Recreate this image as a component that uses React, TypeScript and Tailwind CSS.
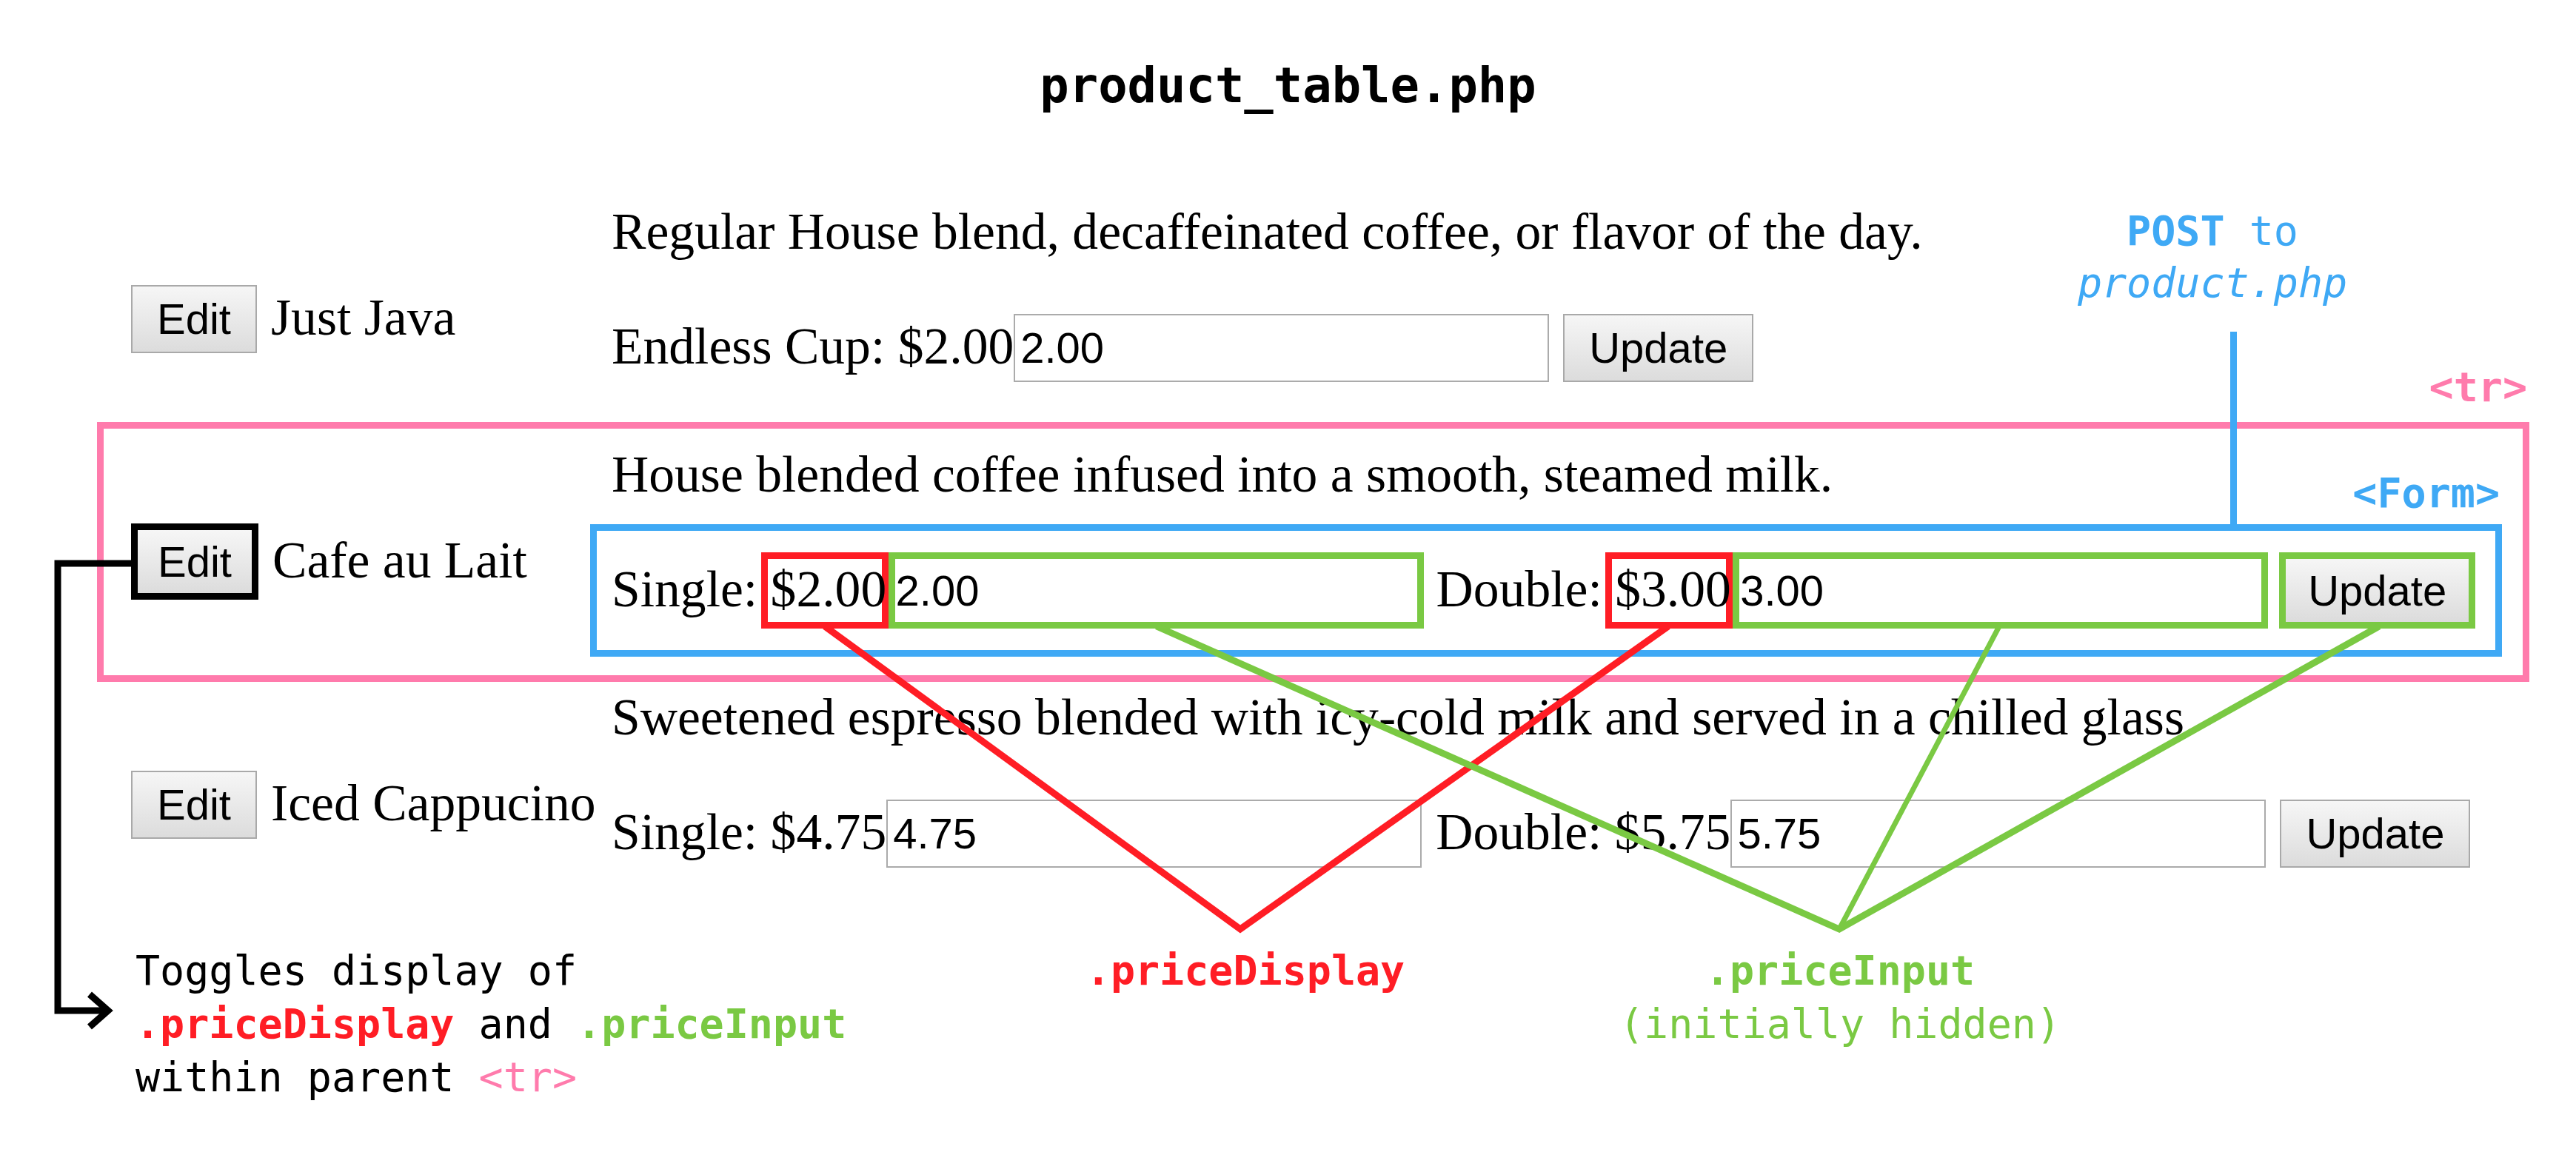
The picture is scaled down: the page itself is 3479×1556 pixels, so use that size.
import type { ReactNode } from "react";

const serif = "font-['Liberation_Serif','Times_New_Roman',serif] text-[69.6px] leading-[80px] text-black whitespace-pre";
const sans = "font-['Liberation_Sans',Arial,sans-serif] text-[58px] text-black";
const mono = "font-['DejaVu_Sans_Mono',monospace] text-[55px] leading-[55px]";

function Label({ children, className = "" }: { children: ReactNode; className?: string }) {
  return <span className={`${serif} mb-[4px] shrink-0 ${className}`}>{children}</span>;
}

function PriceInput({ value, green }: { value: string; green?: boolean }) {
  return (
    <input
      readOnly
      value={value}
      className={`${sans} w-[723px] shrink-0 bg-white outline-none ${
        green ? "h-[103px] border-[9px] border-[#7ac943] pl-[1px]" : "h-[92px] border-2 border-[#ababab] pl-[7px]"
      }`}
    />
  );
}

function PriceDisplay({ value, className = "" }: { value: string; className?: string }) {
  return (
    <span
      className={`${serif} -ml-[13px] h-[103px] w-[172px] shrink-0 overflow-visible border-[9px] border-[#ff1d25] pb-[4px] pl-[4px] leading-[81px] ${className}`}
    >
      {value}
    </span>
  );
}

function UpdateButton({ green, className = "" }: { green?: boolean; className?: string }) {
  return (
    <button
      className={`${sans} flex shrink-0 items-center justify-center bg-linear-to-b from-[#f6f6f6] to-[#dcdcdc] ${
        green ? "h-[103px] w-[265px] border-[9px] border-[#7ac943]" : "h-[92px] w-[257px] border-2 border-[#a9a9a9]"
      } ${className}`}
    >
      Update
    </button>
  );
}

function Row({
  name,
  desc,
  highlight,
  className = "",
  children,
}: {
  name: string;
  desc: string;
  highlight?: boolean;
  className?: string;
  children: ReactNode;
}) {
  return (
    <div
      className={`relative flex h-[351px] w-[3285px] border-[9px] ${
        highlight ? "border-[#ff7bac]" : "border-transparent"
      } ${className}`}
    >
      <div className="flex w-[657px] shrink-0 items-center pl-[37px] pt-[26px]">
        {highlight ? (
          <button
            className={`${sans} flex h-[103px] w-[172px] shrink-0 items-center justify-center border-[9px] border-black bg-linear-to-b from-[#f6f6f6] to-[#dcdcdc]`}
          >
            Edit
          </button>
        ) : (
          <button
            className={`${sans} flex h-[92px] w-[170px] shrink-0 items-center justify-center border-2 border-[#a9a9a9] bg-linear-to-b from-[#f6f6f6] to-[#dcdcdc]`}
          >
            Edit
          </button>
        )}
        <Label className="ml-[19px]">{name}</Label>
      </div>

      <div className="flex flex-col">
        <p className={`${serif} mt-[21.5px] pl-[29px]`}>{desc}</p>
        <div
          className={`relative mt-[27.5px] flex h-[179px] w-[2582px] items-center border-[9px] pl-[20px] ${
            highlight ? "border-[#3fa9f5]" : "border-transparent"
          }`}
        >
          {children}
          {highlight && (
            <span className={`${mono} absolute bottom-[calc(100%+23px)] right-[-6px] font-bold text-[#3fa9f5]`}>
              &lt;Form&gt;
            </span>
          )}
        </div>
      </div>

      {highlight && (
        <span className={`${mono} absolute bottom-[calc(100%+28px)] right-[-6px] font-bold text-[#ff7bac]`}>
          &lt;tr&gt;
        </span>
      )}
    </div>
  );
}

export default function App() {
  return (
    <div className="relative h-[1556px] w-[3479px] overflow-hidden bg-white">
      <h1 className="pt-[77px] text-center font-['DejaVu_Sans_Mono',monospace] text-[65.5px] font-bold leading-[76px] text-black">
        product_table.php
      </h1>

      <div className="mt-[89px] flex flex-col pl-[131px]">
        <Row name="Just Java" desc="Regular House blend, decaffeinated coffee, or flavor of the day.">
          <Label>Endless Cup: $2.00</Label>
          <PriceInput value="2.00" />
          <UpdateButton className="ml-[19px]" />
        </Row>

        <Row
          highlight
          className="-mt-[23px]"
          name="Cafe au Lait"
          desc="House blended coffee infused into a smooth, steamed milk."
        >
          <Label>Single: </Label>
          <PriceDisplay value="$2.00" />
          <PriceInput green value="2.00" />
          <Label className="ml-[17px]">Double: </Label>
          <PriceDisplay value="$3.00" />
          <PriceInput green value="3.00" />
          <UpdateButton green className="ml-[15px]" />
        </Row>

        <Row
          className="-mt-[23px]"
          name="Iced Cappucino"
          desc="Sweetened espresso blended with icy-cold milk and served in a chilled glass."
        >
          <Label>Single: $4.75</Label>
          <PriceInput value="4.75" />
          <Label className="ml-[19px]">Double: $5.75</Label>
          <PriceInput value="5.75" />
          <UpdateButton className="ml-[19px]" />
        </Row>
      </div>

      <div className="mt-[26px] flex pl-[183px] font-['DejaVu_Sans_Mono',monospace] text-[55px] leading-[72px] text-black">
        <div className="w-[1199px] shrink-0 whitespace-pre">
          <div>Toggles display of</div>
          <div>
            <span className="font-bold text-[#ff1d25]">.priceDisplay</span> and{" "}
            <span className="font-bold text-[#7ac943]">.priceInput</span>
          </div>
          <div>
            within parent <span className="text-[#ff7bac]">&lt;tr&gt;</span>
          </div>
        </div>
        <div className="w-[600px] shrink-0 text-center font-bold text-[#ff1d25]">.priceDisplay</div>
        <div className="ml-[203px] w-[600px] shrink-0 text-center text-[#7ac943]">
          <div className="font-bold">.priceInput</div>
          <div>(initially hidden)</div>
        </div>
      </div>

      {/* POST annotation */}
      <div className="absolute left-[2788px] top-[277px] w-[400px] text-center font-['DejaVu_Sans_Mono',monospace] text-[55px] leading-[70px] text-[#3fa9f5]">
        <div className="whitespace-pre">
          <span className="font-bold">POST</span> to
        </div>
        <div className="italic">product.php</div>
      </div>

      <svg
        className="pointer-events-none absolute inset-0"
        width={3479}
        height={1556}
        viewBox="0 0 3479 1556"
        fill="none"
      >
        <line x1={3016.5} y1={448} x2={3016.5} y2={712} stroke="#3fa9f5" strokeWidth={9} />
        <polyline
          points="1114,846 1675,1255 2253,846"
          stroke="#ff1d25"
          strokeWidth={9}
          strokeLinejoin="miter"
        />
        <polyline
          points="1562,846 2484,1255 3213,846"
          stroke="#7ac943"
          strokeWidth={9}
          strokeLinejoin="miter"
        />
        <line x1={2700} y1={846} x2={2484} y2={1255} stroke="#7ac943" strokeWidth={7} />
        <polyline
          points="178,761 78,761 78,1365 143,1365"
          stroke="#000"
          strokeWidth={9}
          strokeLinejoin="miter"
        />
        <polyline points="121,1343 146,1365 121,1387" stroke="#000" strokeWidth={9} strokeLinejoin="miter" />
      </svg>
    </div>
  );
}
